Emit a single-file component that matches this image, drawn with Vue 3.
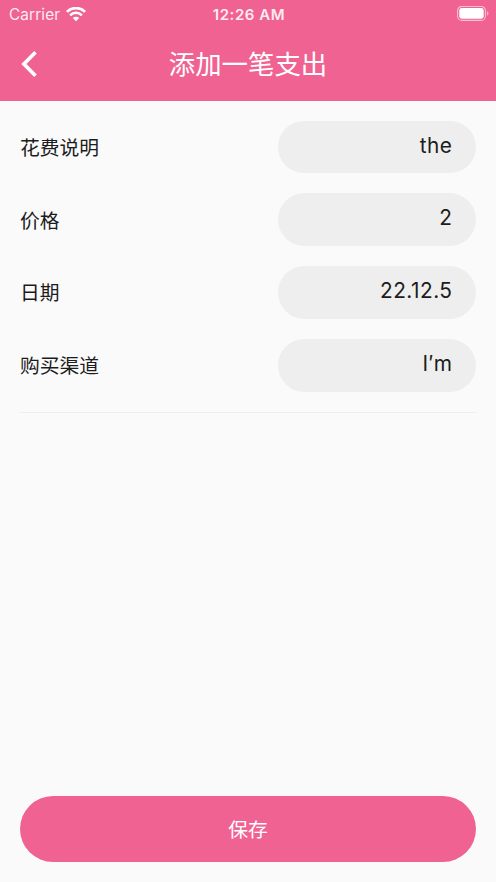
<script setup>
import { reactive } from 'vue'

const fields = reactive([
  { key: 'note', label: '花费说明', value: 'the' },
  { key: 'price', label: '价格', value: '2' },
  { key: 'date', label: '日期', value: '22.12.5' },
  { key: 'channel', label: '购买渠道', value: 'I′m' },
])
</script>

<template>
  <div class="screen">
    <header class="header">
      <div class="status">
        <div class="status-left">
          <span class="carrier">Carrier</span>
          <svg class="wifi" viewBox="0 0 20 15" width="20" height="15" fill="none" stroke="#fff">
            <path d="M0.9 4.9 A12.8 12.8 0 0 1 19.1 4.9" stroke-width="2.7" />
            <path d="M4.1 8.3 A8.3 8.3 0 0 1 15.9 8.3" stroke-width="2.5" />
            <path d="M10 14.2 L6.8 11.1 A4.6 4.6 0 0 1 13.2 11.1 Z" fill="#fff" stroke="none" />
          </svg>
        </div>
        <span class="clock">12:26 AM</span>
        <div class="status-right">
          <svg class="battery" viewBox="0 0 33 16" width="33" height="16">
            <rect x="1.6" y="0.4" width="27.8" height="14" rx="4.2" fill="none" stroke="#fff" stroke-opacity="0.6" stroke-width="1.1" />
            <rect x="3.3" y="2.1" width="24.4" height="10.6" rx="2.4" fill="#fff" />
            <path d="M30.9 5.1 Q32.5 5.7 32.5 7.4 Q32.5 9.1 30.9 9.7 Z" fill="#fff" fill-opacity="0.5" />
          </svg>
        </div>
      </div>
      <div class="navbar">
        <button class="back" type="button">
          <svg viewBox="0 0 18 28" width="18" height="28" fill="none" stroke="#fff" stroke-width="3.7">
            <path d="M15.5 2.2 L3.9 14 L15.5 25.8" />
          </svg>
        </button>
        <h1 class="title">添加一笔支出</h1>
        <span></span>
      </div>
    </header>

    <main class="form">
      <label v-for="field in fields" :key="field.key" class="row">
        <span class="label">{{ field.label }}</span>
        <span class="value">{{ field.value }}</span>
      </label>
      <hr class="divider" />
    </main>

    <footer class="footer">
      <button class="save" type="button">保存</button>
    </footer>
  </div>
</template>

<style>
body {
  margin: 0;
  background: #fafafa;
}
</style>

<style scoped>
.screen {
  display: flex;
  flex-direction: column;
  box-sizing: border-box;
  height: 882px;
  background: #fafafa;
  color: #1c1c1c;
  font-family: Inter, "Noto Sans CJK SC", sans-serif;
}
.header {
  flex: none;
  height: 100.5px;
  background: #f06292;
  color: #fff;
}
.status {
  display: grid;
  grid-template-columns: 1fr auto 1fr;
  align-items: center;
  height: 27px;
  padding: 0 7px 0 9px;
}
.status-left {
  display: flex;
  align-items: center;
  gap: 6px;
}
.carrier {
  padding-top: 1px;
  font-size: 15.3px;
  letter-spacing: 0.15px;
  line-height: 27px;
  opacity: 0.88;
}
.clock {
  padding-top: 1px;
  font-size: 15px;
  font-weight: 600;
  letter-spacing: 0.55px;
  opacity: 0.88;
}
.status-right {
  display: flex;
  justify-content: flex-end;
}
.wifi,
.battery {
  display: block;
}
.navbar {
  display: grid;
  grid-template-columns: 1fr auto 1fr;
  align-items: center;
  height: 73.5px;
  padding: 0 20px;
}
.back {
  display: flex;
  width: 18px;
  padding: 0;
  border: 0;
  background: none;
}
.title {
  margin: 0;
  font-size: 26.4px;
  font-weight: 400;
  line-height: 40px;
}
.form {
  flex: 1;
  display: flex;
  flex-direction: column;
  gap: 20px;
  padding: 20.3px 20px 0;
}
.row {
  display: flex;
  align-items: center;
  justify-content: space-between;
  height: 52.7px;
}
.label {
  padding-top: 1.6px;
  font-size: 19.8px;
  line-height: 30px;
}
.value {
  box-sizing: border-box;
  width: 198.3px;
  height: 52.7px;
  padding: 0 23.5px 3px 20px;
  border-radius: 27px;
  background: #eee;
  font-size: 20.8px;
  line-height: 49.7px;
  letter-spacing: 0.5px;
  text-align: right;
}
.divider {
  width: 100%;
  height: 1.4px;
  margin: 0;
  border: 0;
  background: #eee;
}
.footer {
  padding: 0 20px 20px;
}
.save {
  display: block;
  width: 100%;
  height: 66px;
  padding: 2px 0 0;
  border: 0;
  border-radius: 33px;
  background: #f06292;
  color: #fff;
  font-family: inherit;
  font-size: 19.8px;
  line-height: 64px;
}
</style>
